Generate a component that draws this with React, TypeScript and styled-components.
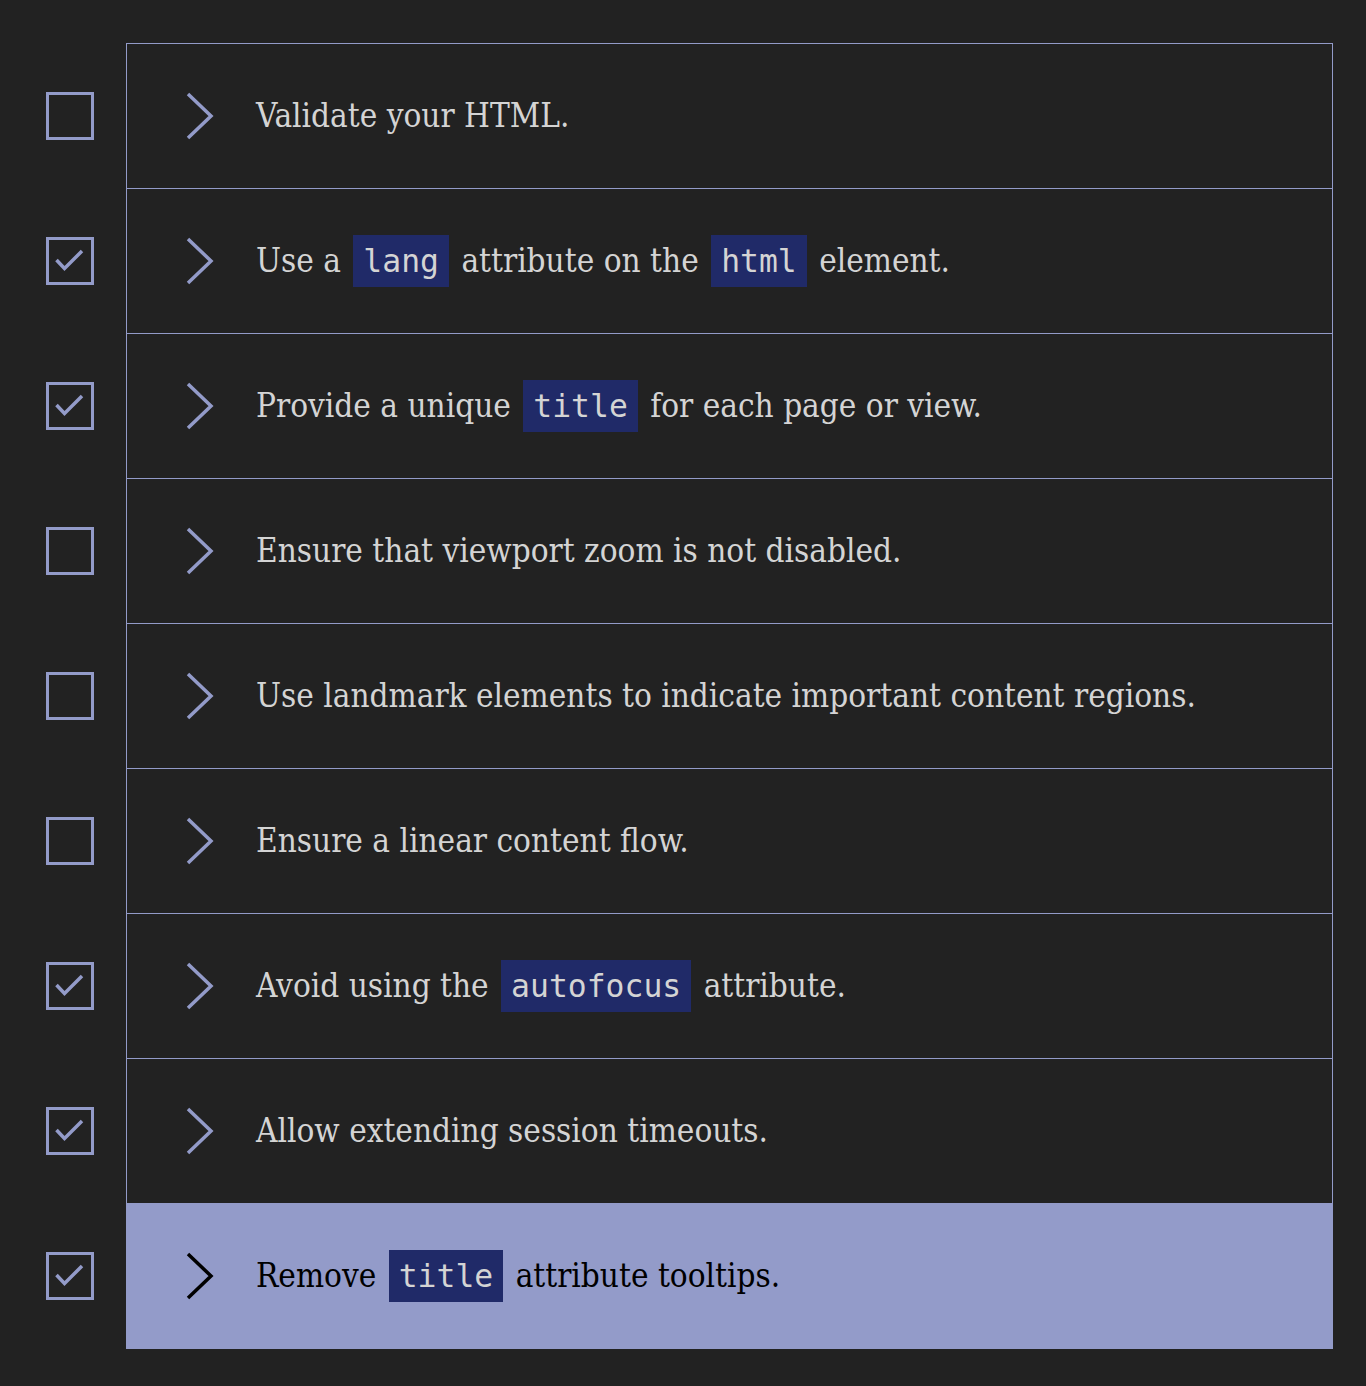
import React from "react";
import styled, { createGlobalStyle } from "styled-components";

const LAV = "#939bc9";

const Global = createGlobalStyle`
  html, body { margin: 0; padding: 0; background: #222222; }
  body { font-family: "DejaVu Serif Condensed", "DejaVu Serif", "Liberation Serif", serif; }
`;

const Page = styled.main`
  padding: 43px 33px 38px 46px;
  display: flex;
  flex-direction: column;
`;

const Item = styled.div`
  display: grid;
  grid-template-columns: 48px 1fr;
  column-gap: 32px;
  align-items: center;
`;

const Box = styled.span<{ $checked: boolean }>`
  box-sizing: border-box;
  width: 48px;
  height: 48px;
  border: 3px solid ${LAV};
  display: flex;
  align-items: center;
  justify-content: center;
`;

const Row = styled.div<{ $active: boolean; $last: boolean }>`
  box-sizing: border-box;
  height: ${(p) => (p.$last ? "146px" : "145px")};
  border: 1px solid ${LAV};
  border-bottom: ${(p) => (p.$last ? `1px solid ${LAV}` : "none")};
  background: ${(p) => (p.$active ? LAV : "transparent")};
  color: ${(p) => (p.$active ? "#000" : "#d4d4d4")};
  display: flex;
  align-items: center;
  padding-left: 59px;
`;

const Chevron = styled.svg`
  flex: none;
  width: 28px;
  height: 48px;
  margin-right: 42px;
`;

const Label = styled.span`
  font-size: 33px;
  font-stretch: condensed;
  line-height: 52px;
  white-space: nowrap;
`;

const Code = styled.code`
  font-family: "DejaVu Sans Mono", "Liberation Mono", monospace;
  font-stretch: normal;
  font-size: 31.4px;
  background: #202a68;
  color: #d4d4d4;
  padding: 0 10px;
  margin: 0 3px;
  display: inline-block;
  height: 52px;
  line-height: 52px;
  vertical-align: top;
`;

type Part = string | { code: string };
const items: { checked: boolean; parts: Part[] }[] = [
  { checked: false, parts: ["Validate your HTML."] },
  { checked: true, parts: ["Use a ", { code: "lang" }, " attribute on the ", { code: "html" }, " element."] },
  { checked: true, parts: ["Provide a unique ", { code: "title" }, " for each page or view."] },
  { checked: false, parts: ["Ensure that viewport zoom is not disabled."] },
  { checked: false, parts: ["Use landmark elements to indicate important content regions."] },
  { checked: false, parts: ["Ensure a linear content flow."] },
  { checked: true, parts: ["Avoid using the ", { code: "autofocus" }, " attribute."] },
  { checked: true, parts: ["Allow extending session timeouts."] },
  { checked: true, parts: ["Remove ", { code: "title" }, " attribute tooltips."] },
];

export default function App() {
  return (
    <>
      <Global />
      <Page>
        {items.map((it, i) => {
          const active = i === items.length - 1;
          return (
            <Item key={i}>
              <Box $checked={it.checked}>
                {it.checked && (
                  <svg width="30" height="24" viewBox="0 0 30 24">
                    <polyline points="1.5,11 9.5,19.5 27,2" fill="none" stroke={LAV} strokeWidth="3.5" />
                  </svg>
                )}
              </Box>
              <Row $active={active} $last={active}>
                <Chevron viewBox="0 0 28 48">
                  <polyline
                    points="2,2 25,24 2,46"
                    fill="none"
                    stroke={active ? "#000" : LAV}
                    strokeWidth="3.5"
                  />
                </Chevron>
                <Label>
                  {it.parts.map((p, j) =>
                    typeof p === "string" ? <React.Fragment key={j}>{p}</React.Fragment> : <Code key={j}>{p.code}</Code>
                  )}
                </Label>
              </Row>
            </Item>
          );
        })}
      </Page>
    </>
  );
}
